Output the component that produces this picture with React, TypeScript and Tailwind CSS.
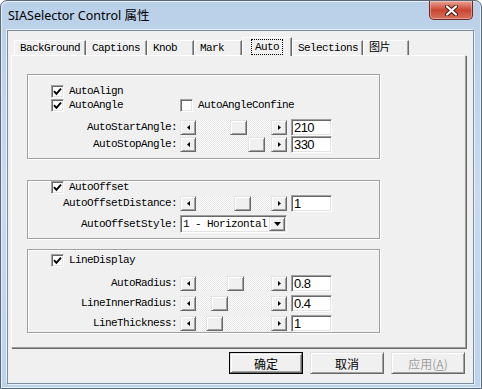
import React from "react";

const raised =
  "border border-t-[#e3e3e3] border-l-[#e3e3e3] border-r-[#696969] border-b-[#696969] shadow-[inset_1px_1px_0_#fff,inset_-1px_-1px_0_#a0a0a0] bg-[#f0f0f0]";
const sunken =
  "border border-t-[#a0a0a0] border-l-[#a0a0a0] border-r-white border-b-white shadow-[inset_1px_1px_0_#696969,inset_-1px_-1px_0_#e3e3e3] bg-white";
const etched =
  "border border-[#a0a0a0] shadow-[inset_1px_1px_0_#fff,1px_1px_0_#fff]";

function Arrow({ dir }: { dir: "left" | "right" | "down" }) {
  if (dir === "down") {
    return (
      <svg width="7" height="4" viewBox="0 0 7 4">
        <polygon points="0,0 7,0 3.5,4" fill="#000" />
      </svg>
    );
  }
  return (
    <svg width="3" height="5" viewBox="0 0 3 5">
      <polygon points={dir === "left" ? "3,0 3,5 0,2.5" : "0,0 0,5 3,2.5"} fill="#000" />
    </svg>
  );
}

function CheckBox({ checked }: { checked: boolean }) {
  return (
    <div className={`w-[13px] h-[13px] shrink-0 flex items-center justify-center ${sunken}`}>
      {checked && (
        <svg width="9" height="9" viewBox="0 0 9 9">
          <path d="M1 4.2 L3.4 6.8 L8 1.6" stroke="#000" strokeWidth="1.9" fill="none" />
        </svg>
      )}
    </div>
  );
}

function CheckItem({ label, checked, width }: { label: string; checked: boolean; width?: string }) {
  return (
    <div className={`flex items-center h-[13px] ${width ?? ""}`}>
      <CheckBox checked={checked} />
      <span className="ml-[5px]">{label}</span>
    </div>
  );
}

function SliderRow({ label, thumb, value }: { label: string; thumb: number; value: string }) {
  return (
    <div className="flex items-center h-[17px]">
      <span className="w-[152px] pr-[3px] text-right">{label}</span>
      <div className="flex w-[107px] h-[15px]">
        <div className={`w-[16px] h-[15px] flex items-center justify-center ${raised}`}>
          <Arrow dir="left" />
        </div>
        <div className="flex-1 flex bg-[repeating-conic-gradient(#ffffff_0_25%,#e4e4e4_0_50%)] bg-[length:2px_2px]">
          <div className={`w-[17px] h-[15px] ${raised}`} style={{ marginLeft: thumb }} />
        </div>
        <div className={`w-[16px] h-[15px] flex items-center justify-center ${raised}`}>
          <Arrow dir="right" />
        </div>
      </div>
      <div
        className={`ml-[4px] w-[41px] h-[17px] pl-[2px] flex items-center font-['Liberation_Sans',sans-serif] text-[13px] text-black ${sunken}`}
      >
        {value}
      </div>
    </div>
  );
}

const tabs = [
  { name: "BackGround", w: "w-[72px]" },
  { name: "Captions", w: "w-[61px]" },
  { name: "Knob", w: "w-[47px]" },
  { name: "Mark", w: "w-[48px]" },
  { name: "Auto", w: "w-[50px]", active: true },
  { name: "Selections", w: "w-[71px]" },
  { name: "图片", w: "w-[46px]" },
];

export default function App() {
  return (
    <div className="w-[482px] h-[389px] overflow-hidden bg-white">
      <div className="w-[482px] h-[389px] flex flex-col rounded-t-[7px] border border-[#5a6878] bg-gradient-to-b from-[#b9d0e8] via-[#c8dbef] to-[#bcd3ec] shadow-[inset_1px_1px_0_#e6f0fa,inset_-1px_-1px_0_#e6f0fa]">
        {/* title bar */}
        <div className="h-[29px] flex items-start justify-between pl-[7px] pr-[8px]">
          <span className="mt-[7px] text-[12.5px] leading-[16px] text-black font-['Noto_Sans','Noto_Sans_CJK_SC',sans-serif]">
            SIASelector Control 属性
          </span>
          <div className="w-[44px] h-[19px] rounded-b-[5px] border border-t-0 border-[#6b2a22] bg-gradient-to-b from-[#e8a293] via-[#c9452f] to-[#d8705c] flex items-center justify-center shadow-[inset_0_0_0_1px_rgba(255,255,255,0.35)]">
            <svg width="13" height="11" viewBox="0 0 13 11">
              <path d="M2 1.5 L11 9.5 M11 1.5 L2 9.5" stroke="#3d1a14" strokeWidth="4" strokeLinecap="round" />
              <path d="M2 1.5 L11 9.5 M11 1.5 L2 9.5" stroke="#ffffff" strokeWidth="2.2" strokeLinecap="round" />
            </svg>
          </div>
        </div>

        {/* client area */}
        <div className="ml-[6px] w-[467px] h-[354px] bg-[#f0f0f0] border border-[#7d8c9e] shadow-[-1px_-1px_0_#e8f1fa,1px_1px_0_#e8f1fa] text-[11px] tracking-[-0.6px] leading-[13px] text-black font-['Liberation_Mono','Noto_Sans_CJK_SC',monospace]">
          <div className="ml-[3px] mt-[6px] w-[455px]">
            {/* tab strip */}
            <div className="flex items-end h-[18px] pl-[3px]">
              {tabs.map((t) =>
                t.active ? (
                  <div
                    key={t.name}
                    className={`${t.w} h-[19px] -mb-px relative z-10 bg-[#f0f0f0] border-t border-l border-t-white border-l-white border-r border-r-[#696969] shadow-[inset_-1px_0_0_#a0a0a0] flex items-start justify-center pt-px`}
                  >
                    <span className="border border-dotted border-black px-[3px] h-[16px] leading-[14px]">
                      {t.name}
                    </span>
                  </div>
                ) : (
                  <div
                    key={t.name}
                    className={`${t.w} h-[15px] bg-[#f0f0f0] border-t border-l border-t-white border-l-white border-r border-r-[#696969] shadow-[inset_-1px_0_0_#a0a0a0] pl-[5px] flex items-center`}
                  >
                    {t.name}
                  </div>
                )
              )}
            </div>

            {/* tab page */}
            <div className="h-[293px] border border-t-white border-l-white border-r-[#a0a0a0] border-b-[#a0a0a0] shadow-[1px_1px_0_#696969] pt-[18px] pl-[15px]">
              {/* group 1 */}
              <div className={`w-[353px] h-[85px] ${etched} pt-[10px]`}>
                <div className="ml-[23px] flex flex-col gap-px">
                  <CheckItem label="AutoAlign" checked />
                  <div className="flex">
                    <CheckItem label="AutoAngle" checked width="w-[129px]" />
                    <CheckItem label="AutoAngleConfine" checked={false} />
                  </div>
                </div>
                <div className="mt-[7px]">
                  <SliderRow label="AutoStartAngle:" thumb={34} value="210" />
                  <SliderRow label="AutoStopAngle:" thumb={52} value="330" />
                </div>
              </div>

              {/* group 2 */}
              <div className={`mt-[21px] w-[353px] h-[59px] ${etched}`}>
                <div className="ml-[23px]">
                  <CheckItem label="AutoOffset" checked />
                </div>
                <div className="mt-px">
                  <SliderRow label="AutoOffsetDistance:" thumb={38} value="1" />
                </div>
                <div className="mt-[3px] flex items-center h-[18px]">
                  <span className="w-[152px] pr-[3px] text-right">AutoOffsetStyle:</span>
                  <div className={`w-[107px] h-[18px] flex items-center justify-between pl-[2px] pr-px ${sunken}`}>
                    <span>1 - Horizontal</span>
                    <div className={`w-[16px] h-[14px] flex items-center justify-center ${raised}`}>
                      <Arrow dir="down" />
                    </div>
                  </div>
                </div>
              </div>

              {/* group 3 */}
              <div className={`mt-[10px] w-[353px] h-[84px] ${etched} pt-[4px]`}>
                <div className="ml-[23px]">
                  <CheckItem label="LineDisplay" checked />
                </div>
                <div className="mt-[8px] flex flex-col gap-[3px]">
                  <SliderRow label="AutoRadius:" thumb={31} value="0.8" />
                  <SliderRow label="LineInnerRadius:" thumb={15} value="0.4" />
                  <SliderRow label="LineThickness:" thumb={10} value="1" />
                </div>
              </div>
            </div>
          </div>

          {/* buttons */}
          <div className="mt-[4px] ml-[221px] flex gap-[7px] tracking-normal font-['Noto_Sans_CJK_SC',sans-serif] text-[12px]">
            <div className="w-[74px] h-[22px] border border-black">
              <div className={`w-full h-full flex items-center justify-center ${raised}`}>确定</div>
            </div>
            <div className={`w-[74px] h-[22px] flex items-center justify-center ${raised}`}>取消</div>
            <div className={`w-[74px] h-[22px] flex items-center justify-center text-[#a0a0a0] ${raised}`}>
              应用(<u>A</u>)
            </div>
          </div>
        </div>
      </div>
    </div>
  );
}
